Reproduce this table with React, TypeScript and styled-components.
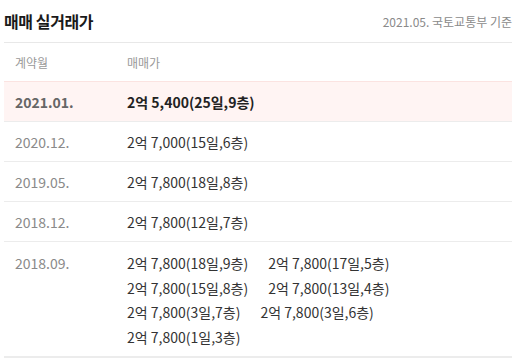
import React from 'react';
import styled, { createGlobalStyle } from 'styled-components';

const GlobalStyle = createGlobalStyle`
  html, body {
    margin: 0;
    padding: 0;
    background: #ffffff;
  }
  body {
    font-family: 'Noto Sans CJK KR', 'Noto Sans', sans-serif;
  }
`;

interface IDeal {
  month: string;
  prices: string[];
  highlight?: boolean;
}

const deals: IDeal[] = [
  { month: '2021.01.', prices: ['2억 5,400(25일,9층)'], highlight: true },
  { month: '2020.12.', prices: ['2억 7,000(15일,6층)'] },
  { month: '2019.05.', prices: ['2억 7,800(18일,8층)'] },
  { month: '2018.12.', prices: ['2억 7,800(12일,7층)'] },
  {
    month: '2018.09.',
    prices: [
      '2억 7,800(18일,9층)',
      '2억 7,800(17일,5층)',
      '2억 7,800(15일,8층)',
      '2억 7,800(13일,4층)',
      '2억 7,800(3일,7층)',
      '2억 7,800(3일,6층)',
      '2억 7,800(1일,3층)',
    ],
  },
];

const StyledSection = styled.section`
  width: 508px;
  margin: 0 6px 0 4px;
`;

const StyledHeader = styled.div`
  display: flex;
  justify-content: space-between;
  align-items: center;
  height: 42px;
  border-bottom: 1px solid #e8e8e8;

  h2 {
    margin: 0;
    font-size: 16px;
    font-weight: 700;
    color: #1a1a1a;
    letter-spacing: -0.4px;
  }

  span {
    font-size: 12px;
    color: #8a8a8a;
  }
`;

const StyledHeadRow = styled.div`
  display: grid;
  grid-template-columns: 123px 1fr;
  align-items: center;
  height: 38px;
  font-size: 12px;
  color: #999;

  span:first-child {
    padding-left: 11px;
  }
`;

const StyledRow = styled.div<{ $highlight?: boolean }>`
  display: grid;
  grid-template-columns: 123px 1fr;
  align-items: start;
  padding: 8px 0 7px;
  border-top: 1px solid ${(props) => (props.$highlight ? '#fbe3e1' : '#ececec')};
  background-color: ${(props) => (props.$highlight ? '#fff4f3' : 'transparent')};
  font-size: 14px;
  line-height: 24px;

  &:last-child {
    padding-top: 9px;
    line-height: 24.6px;
    border-bottom: 2px solid #ececec;
  }
`;

const StyledMonth = styled.span<{ $highlight?: boolean }>`
  padding-left: 11px;
  color: ${(props) => (props.$highlight ? '#666' : '#8a8a8a')};
  font-weight: ${(props) => (props.$highlight ? 700 : 400)};
`;

const StyledPrices = styled.div<{ $highlight?: boolean }>`
  display: flex;
  flex-wrap: wrap;
  column-gap: 20px;
  max-width: 290px;
  color: ${(props) => (props.$highlight ? '#222' : '#333')};
  font-weight: ${(props) => (props.$highlight ? 700 : 400)};
`;

const App: React.FC = () => {
  return (
    <StyledSection>
      <GlobalStyle />
      <StyledHeader>
        <h2>매매 실거래가</h2>
        <span>2021.05. 국토교통부 기준</span>
      </StyledHeader>
      <StyledHeadRow>
        <span>계약월</span>
        <span>매매가</span>
      </StyledHeadRow>
      {deals.map((deal) => (
        <StyledRow key={deal.month} $highlight={deal.highlight}>
          <StyledMonth $highlight={deal.highlight}>{deal.month}</StyledMonth>
          <StyledPrices $highlight={deal.highlight}>
            {deal.prices.map((price, i) => (
              <span key={i}>{price}</span>
            ))}
          </StyledPrices>
        </StyledRow>
      ))}
    </StyledSection>
  );
};

export default App;
